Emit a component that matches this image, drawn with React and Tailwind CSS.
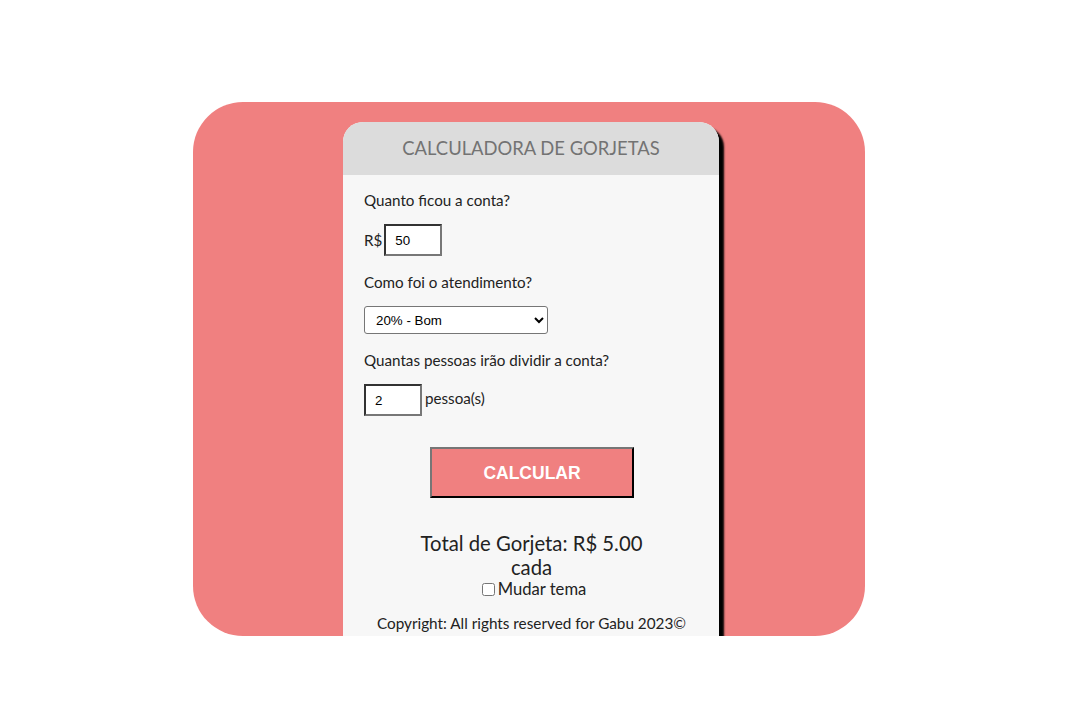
export default function App() {
  const lato = { fontFamily: 'Lato, "Open Sans", sans-serif' };
  return (
    <div className="w-[1080px] h-[720px] bg-white relative" style={lato}>
      <div className="absolute left-[193px] top-[102px] w-[672px] h-[534px] bg-[#f08080] rounded-[50px] overflow-hidden pl-[150px] pt-[20px]">
        <div className="w-[376px] h-[600px] bg-[#f7f7f7] rounded-t-[20px] shadow-[5px_5px_2px_#000] flex flex-col">
          <div className="h-[53px] bg-[#dcdcdc] rounded-t-[20px] flex items-center justify-center text-[18.4px] text-[#737373]">
            CALCULADORA DE GORJETAS
          </div>
          <div className="pl-[21px] pr-[20px] pt-[15px] text-[15.2px] text-[#222] leading-[20px]">
            <div>Quanto ficou a conta?</div>
            <div className="mt-[14px] flex items-center h-[32px]">
              <span className="mr-[2px]">R$</span>
              <input
                defaultValue="50"
                className="w-[58px] h-[32px] bg-white border-2 border-solid border-t-[#333] border-l-[#333] border-b-[#777] border-r-[#777] px-[9px] text-[13.33px] text-black outline-none"
                style={{ fontFamily: 'Arial, "Liberation Sans", sans-serif' }}
              />
            </div>
            <div className="mt-[16px]">Como foi o atendimento?</div>
            <div className="mt-[14px]">
              <select
                defaultValue="20"
                className="w-[184px] h-[28px] bg-white border border-[#767676] rounded-[3px] pl-[7px] text-[13.33px] text-black"
                style={{ fontFamily: 'Arial, "Liberation Sans", sans-serif' }}
              >
                <option value="20">20% - Bom</option>
              </select>
            </div>
            <div className="mt-[16px]">Quantas pessoas irão dividir a conta?</div>
            <div className="mt-[14px] flex items-center h-[32px]">
              <input
                defaultValue="2"
                className="w-[58px] h-[32px] bg-white border-2 border-solid border-t-[#333] border-l-[#333] border-b-[#777] border-r-[#777] px-[9px] text-[13.33px] text-black outline-none"
                style={{ fontFamily: 'Arial, "Liberation Sans", sans-serif' }}
              />
              <span className="ml-[3px] -mt-[4px]">pessoa(s)</span>
            </div>
            <div className="mt-[31px] flex justify-center pl-[1px]">
              <button
                className="w-[204px] h-[51px] bg-[#f08080] border-2 border-solid border-t-[#767676] border-l-[#767676] border-b-black border-r-black text-white font-bold text-[17.5px]"
                style={{ fontFamily: 'Arial, "Liberation Sans", sans-serif' }}
              >
                CALCULAR
              </button>
            </div>
            <div className="mt-[33px] text-center text-[20.3px] leading-[24px] text-[#222]">
              <div>Total de Gorjeta: R$ 5.00</div>
              <div>cada</div>
            </div>
            <div className="flex items-center justify-center h-[20px] pl-[5px]">
              <input type="checkbox" className="w-[13px] h-[13px] mr-[3px]" />
              <span className="text-[16.6px]">Mudar tema</span>
            </div>
            <div className="mt-[14px] text-center text-[15.3px]">Copyright: All rights reserved for Gabu 2023©</div>
          </div>
        </div>
      </div>
    </div>
  );
}
